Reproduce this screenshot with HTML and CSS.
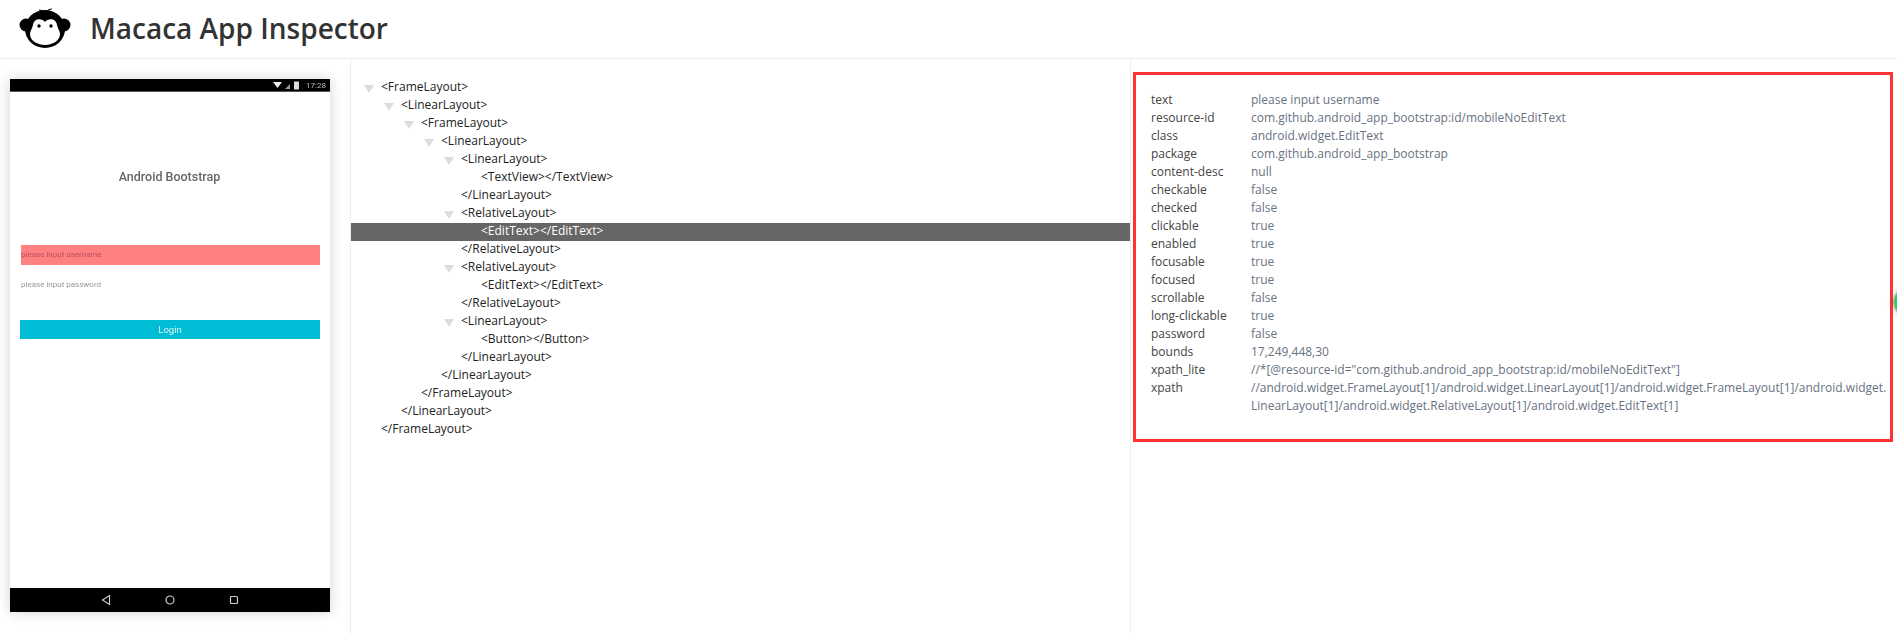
FILE: index.html
```html
<!DOCTYPE html>
<html lang="en">
<head>
<meta charset="utf-8">
<title>Macaca App Inspector</title>
<link rel="stylesheet" href="styles.css">
</head>
<body>
<header class="header">
  <svg class="logo" viewBox="0 0 52 42" width="52" height="42" aria-hidden="true">
    <path d="M26 7 C28 4 31 3 33 3 M26 7 C24 5 22 4 20 4" fill="none" stroke="#000" stroke-width="1"/>
    <circle cx="7" cy="19" r="6.500" fill="#000"/>
    <circle cx="45" cy="19" r="6.500" fill="#000"/>
    <ellipse cx="26" cy="23" rx="20" ry="19" fill="#000"/>
    <path d="M26 16 C29 12 37 12 38 19 C39 23 41 25 41 28 C41 35 33 39 26 39 C19 39 11 35 11 28 C11 25 13 23 14 19 C15 12 23 12 26 16 Z" fill="#fff"/>
    <circle cx="20" cy="20" r="1.700" fill="#000"/>
    <circle cx="32" cy="20" r="1.700" fill="#000"/>
  </svg>
  <h1 class="title">Macaca App Inspector</h1>
</header>
<main class="main">
  <section class="screen-pane">
    <div class="phone">
      <div class="status-bar">
        <svg class="status-icons" viewBox="0 0 46 9" width="46" height="9" aria-hidden="true">
          <path d="M1 1 H10 L5.500 7 Z" fill="#eee"/>
          <path d="M13 8 L18 3 V8 Z" fill="#999"/>
          <rect x="22" y="0.500" width="5" height="8" fill="#ddd"/>
        </svg>
        <span class="clock">17:28</span>
      </div>
      <div class="app">
        <div class="app-title">Android Bootstrap</div>
        <div class="field field-selected">please input username</div>
        <div class="field field-plain">please input password</div>
        <div class="login">Login</div>
      </div>
      <div class="nav-bar">
        <svg viewBox="0 0 10 12" width="10" height="12" aria-hidden="true"><path d="M8.500 1.500 V10.500 L1.500 6 Z" fill="none" stroke="#ccc" stroke-width="1.200"/></svg>
        <svg viewBox="0 0 10 10" width="10" height="10" aria-hidden="true"><circle cx="5" cy="5" r="4" fill="none" stroke="#ccc" stroke-width="1.200"/></svg>
        <svg viewBox="0 0 10 10" width="10" height="10" aria-hidden="true"><rect x="1.500" y="1.500" width="7" height="7" rx="1" fill="none" stroke="#ccc" stroke-width="1.200"/></svg>
      </div>
    </div>
  </section>
  <section class="tree-pane">
    <ul class="tree">
      <li class="node d0"><i class="arrow"></i>&lt;FrameLayout&gt;</li>
      <li class="node d1"><i class="arrow"></i>&lt;LinearLayout&gt;</li>
      <li class="node d2"><i class="arrow"></i>&lt;FrameLayout&gt;</li>
      <li class="node d3"><i class="arrow"></i>&lt;LinearLayout&gt;</li>
      <li class="node d4"><i class="arrow"></i>&lt;LinearLayout&gt;</li>
      <li class="node d5"><i class="spacer"></i>&lt;TextView&gt;&lt;/TextView&gt;</li>
      <li class="node d4"><i class="spacer"></i>&lt;/LinearLayout&gt;</li>
      <li class="node d4"><i class="arrow"></i>&lt;RelativeLayout&gt;</li>
      <li class="node d5 active"><i class="spacer"></i>&lt;EditText&gt;&lt;/EditText&gt;</li>
      <li class="node d4"><i class="spacer"></i>&lt;/RelativeLayout&gt;</li>
      <li class="node d4"><i class="arrow"></i>&lt;RelativeLayout&gt;</li>
      <li class="node d5"><i class="spacer"></i>&lt;EditText&gt;&lt;/EditText&gt;</li>
      <li class="node d4"><i class="spacer"></i>&lt;/RelativeLayout&gt;</li>
      <li class="node d4"><i class="arrow"></i>&lt;LinearLayout&gt;</li>
      <li class="node d5"><i class="spacer"></i>&lt;Button&gt;&lt;/Button&gt;</li>
      <li class="node d4"><i class="spacer"></i>&lt;/LinearLayout&gt;</li>
      <li class="node d3"><i class="spacer"></i>&lt;/LinearLayout&gt;</li>
      <li class="node d2"><i class="spacer"></i>&lt;/FrameLayout&gt;</li>
      <li class="node d1"><i class="spacer"></i>&lt;/LinearLayout&gt;</li>
      <li class="node d0"><i class="spacer"></i>&lt;/FrameLayout&gt;</li>
    </ul>
  </section>
  <section class="detail-pane">
    <div class="detail-box">
      <dl class="props">
        <dt>text</dt><dd>please input username</dd>
        <dt>resource-id</dt><dd>com.github.android_app_bootstrap:id/mobileNoEditText</dd>
        <dt>class</dt><dd>android.widget.EditText</dd>
        <dt>package</dt><dd>com.github.android_app_bootstrap</dd>
        <dt>content-desc</dt><dd>null</dd>
        <dt>checkable</dt><dd>false</dd>
        <dt>checked</dt><dd>false</dd>
        <dt>clickable</dt><dd>true</dd>
        <dt>enabled</dt><dd>true</dd>
        <dt>focusable</dt><dd>true</dd>
        <dt>focused</dt><dd>true</dd>
        <dt>scrollable</dt><dd>false</dd>
        <dt>long-clickable</dt><dd>true</dd>
        <dt>password</dt><dd>false</dd>
        <dt>bounds</dt><dd>17,249,448,30</dd>
        <dt>xpath_lite</dt><dd>//*[@resource-id="com.github.android_app_bootstrap:id/mobileNoEditText"]</dd>
        <dt>xpath</dt><dd class="wrap">//android.widget.FrameLayout[1]/android.widget.LinearLayout[1]/android.widget.FrameLayout[1]/android.widget.LinearLayout[1]/android.widget.RelativeLayout[1]/android.widget.EditText[1]</dd>
      </dl>
    </div>
    <div class="float-dot"></div>
  </section>
</main>
</body>
</html>
```
FILE: styles.css
```css
* { box-sizing: border-box; }
html, body { margin: 0; padding: 0; height: 100%; overflow: hidden; background: #fff; }
body { font-family: "Open Sans", "Liberation Sans", sans-serif; color: #000; }

.header { height: 59px; display: flex; align-items: center; padding-left: 19px; padding-bottom: 2px; border-bottom: 1px solid #eee; }
.logo { display: block; margin-top: -2px; }
.title { margin: 0 0 0 19px; font-size: 28px; font-weight: 600; line-height: 38px; color: #333; }

.main { display: flex; height: 575px; }
.screen-pane { width: 351px; flex: none; padding: 20px 0 0 10px; border-right: 1px solid #eee; }
.phone { width: 320px; height: 533px; display: flex; flex-direction: column; box-shadow: 0 0 12px rgba(0,0,0,.18); background: #fff; font-family: Roboto, "Liberation Sans", sans-serif; }
.status-bar { height: 13px; background: #000; border-bottom: 1px solid #555; display: flex; align-items: center; justify-content: flex-end; gap: 3px; padding-right: 4px; }
.status-icons { margin-right: -15px; }
.clock { font-size: 8px; color: #bbb; filter: blur(.3px); }
.app { flex: 1; display: flex; flex-direction: column; padding: 0 10px 0 11px; }
.app-title { margin: 75px 2px 0 0; height: 20px; line-height: 20px; text-align: center; font-size: 12.500px; color: #666; font-weight: 500; filter: blur(.4px); }
.field { height: 20px; line-height: 20px; font-size: 8px; filter: blur(.3px); }
.field-selected { margin-top: 58px; background: #ff8080; color: #b8505a; }
.field-plain { margin-top: 10px; color: #999; }
.login { margin: 25px 0 0 -1px; height: 19px; line-height: 19px; text-align: center; background: #00bcd4; color: #d8f6fb; font-size: 9.500px; font-weight: 400; filter: blur(.3px); }
.nav-bar { height: 24px; background: #000; display: flex; align-items: center; justify-content: center; gap: 54px; }

.tree-pane { width: 780px; flex: none; padding-top: 20px; border-right: 1px solid #eee; }
.tree { list-style: none; margin: 0; padding: 0; font-size: 12px; line-height: 16px; color: #222; }
.node { height: 18px; padding-bottom: 2px; display: flex; align-items: center; white-space: nowrap; }
.d0 { padding-left: 14px; }
.d1 { padding-left: 34px; }
.d2 { padding-left: 54px; }
.d3 { padding-left: 74px; }
.d4 { padding-left: 94px; }
.d5 { padding-left: 114px; }
.arrow { width: 0; height: 0; margin: 3px 7px 0 -1px; border-left: 5px solid transparent; border-right: 5px solid transparent; border-top: 8px solid #ddd; flex: none; }
.spacer { width: 16px; flex: none; }
.active { background: #666; color: #fff; }

.detail-pane { flex: 1; min-width: 0; padding: 13px 4px 0 2px; }
.detail-box { height: 370px; border: 3px solid #f33; padding: 16px 0 0 15px; }
.props { margin: 0; display: grid; grid-template-columns: 100px 638px; font-size: 12px; line-height: 18px; }
.props dt { color: #444; }
.props dd { margin: 0; color: #687282; }
.wrap { word-break: break-all; }
.float-dot { position: absolute; left: 1893px; top: 286px; width: 32px; height: 32px; border-radius: 50%; background: #3c6; border: 1px solid #bbb; box-shadow: 0 0 6px rgba(0,0,0,.2); }
```
